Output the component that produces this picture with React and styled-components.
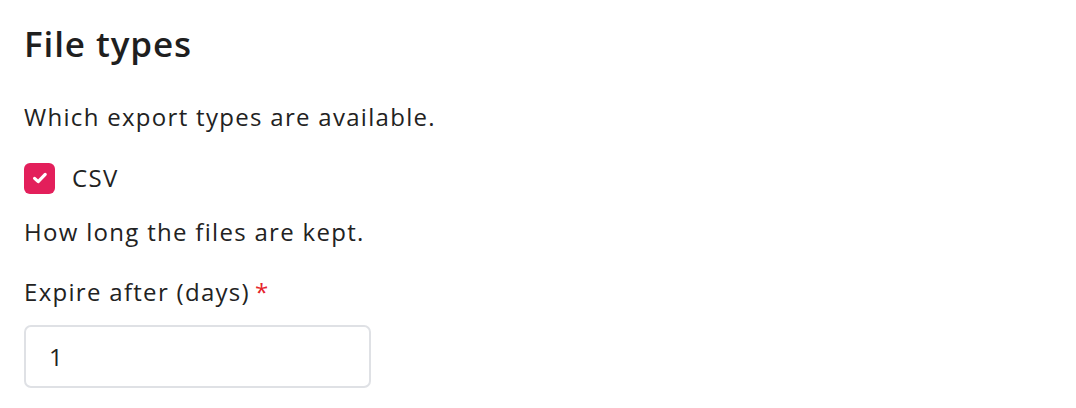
import React from 'react';
import styled, { createGlobalStyle } from 'styled-components';

const GlobalStyle = createGlobalStyle`
  body {
    margin: 0;
    background: #ffffff;
    font-family: 'Open Sans', 'Noto Sans', sans-serif;
    color: #222222;
  }
`;

const Section = styled.div`
  padding: 20px 24px;
  display: flex;
  flex-direction: column;
  align-items: flex-start;
`;

const Title = styled.h2`
  margin: 0 0 32px;
  font-size: 35px;
  font-weight: 600;
  letter-spacing: 0.9px;
  line-height: 48px;
  color: #1f1f1f;
`;

const Hint = styled.p`
  margin: 0 0 ${(p) => p.gap || 0}px;
  font-size: 24px;
  letter-spacing: 1.3px;
  line-height: 34px;
  color: #222;
`;

const CheckRow = styled.label`
  display: flex;
  align-items: center;
  gap: 17px;
  margin-bottom: 20px;
  font-size: 24px;
  letter-spacing: 1.3px;
  line-height: 34px;
`;

const Box = styled.span`
  width: 31px;
  height: 31px;
  border-radius: 6px;
  background: #e31f5b;
  display: flex;
  align-items: center;
  justify-content: center;
`;

const Label = styled.div`
  font-size: 24px;
  letter-spacing: 1.3px;
  line-height: 34px;
  margin-bottom: 16px;
`;

const Req = styled.span`
  color: #e5242b;
  margin-left: 5px;
`;

const Input = styled.input`
  width: 347px;
  height: 63px;
  box-sizing: border-box;
  border: 2px solid #dfe1e5;
  border-radius: 7px;
  padding: 0 23px;
  font-family: inherit;
  font-size: 24px;
  color: #222;
  outline: none;
`;

export default function App() {
  return (
    <>
      <GlobalStyle />
      <Section>
        <Title>File types</Title>
        <Hint gap={27}>Which export types are available.</Hint>
        <CheckRow>
          <Box>
            <svg width="18" height="18" viewBox="0 0 18 18">
              <path d="M3.6 9.4 L7.2 12.6 L14.2 5.4" fill="none" stroke="#fff" strokeWidth="3.2" strokeLinecap="round" strokeLinejoin="round" />
            </svg>
          </Box>
          CSV
        </CheckRow>
        <Hint gap={26}>How long the files are kept.</Hint>
        <Label>Expire after (days)<Req>*</Req></Label>
        <Input defaultValue="1" />
      </Section>
    </>
  );
}
